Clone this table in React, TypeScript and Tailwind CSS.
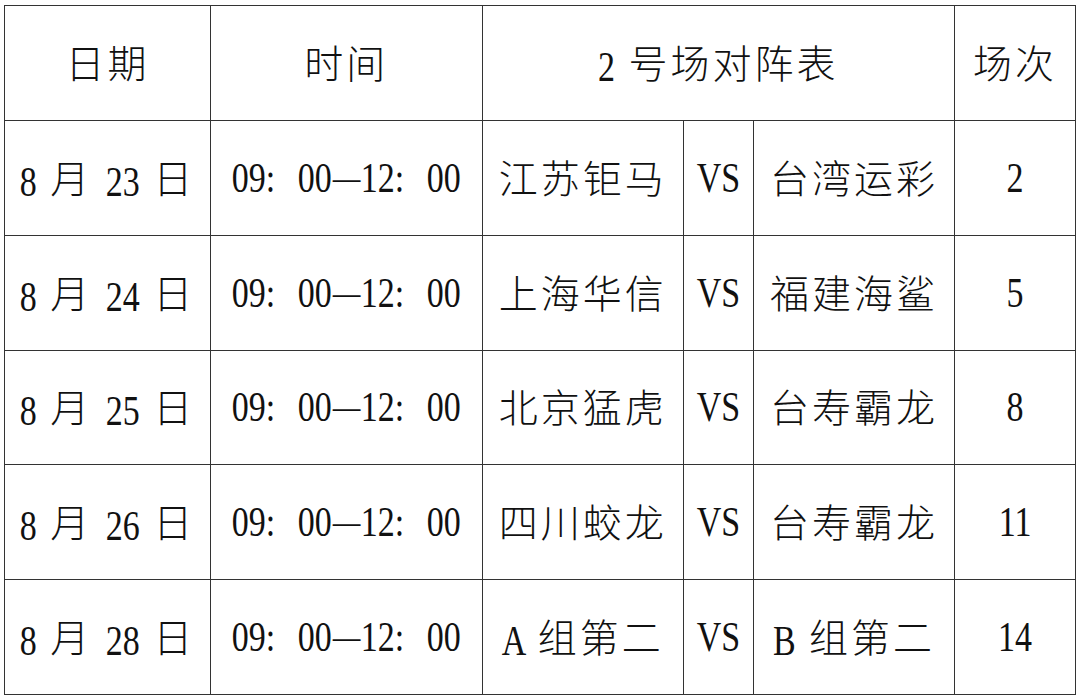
import React from 'react';

interface Match {
    date: string;
    time: string;
    home: string;
    away: string;
    round: string;
}

const matches: Match[] = [
    { date: '8 月 23 日', time: '09: 00–12: 00', home: '江苏钜马', away: '台湾运彩', round: '2' },
    { date: '8 月 24 日', time: '09: 00–12: 00', home: '上海华信', away: '福建海鲨', round: '5' },
    { date: '8 月 25 日', time: '09: 00–12: 00', home: '北京猛虎', away: '台寿霸龙', round: '8' },
    { date: '8 月 26 日', time: '09: 00–12: 00', home: '四川蛟龙', away: '台寿霸龙', round: '11' },
    { date: '8 月 28 日', time: '09: 00–12: 00', home: 'A 组第二', away: 'B 组第二', round: '14' },
];

const SPLIT = /([\u4e00-\u9fff]+|–)/;
const IS_CJK = /[\u4e00-\u9fff]/;

// Latin runs are drawn taller than normal, as in the source document
function Txt({ s, wide }: { s: string; wide?: boolean }) {
    const parts = s.split(SPLIT).filter(Boolean);
    return (
        <span className={`whitespace-nowrap text-[#111] ${wide ? '[word-spacing:14px]' : '[word-spacing:5px]'}`}>
            {parts.map((p, i) => {
                if (IS_CJK.test(p)) {
                    return (
                        <span key={i} className="font-['Noto_Sans_CJK_SC',sans-serif] font-light text-[39px] tracking-[3px] leading-none">
                            {p}
                        </span>
                    );
                }
                if (p === '–') {
                    return (
                        <span key={i} className="inline-block mx-[6px] scale-x-[1.6] font-['Liberation_Serif',serif] text-[34px] leading-none">
                            {p}
                        </span>
                    );
                }
                return (
                    <span key={i} className="inline-block scale-y-[1.27] font-['Liberation_Serif',serif] text-[34px] leading-none whitespace-pre">
                        {p}
                    </span>
                );
            })}
        </span>
    );
}

const cell = 'border-[1.5px] border-[#333] text-center align-middle p-0';

export default function App() {
    return (
        <div className="bg-white w-[1080px] h-[695px] pl-[4px] pt-[5px] overflow-hidden">
            <table className="border-collapse table-fixed w-[1071px]">
                <colgroup>
                    <col className="w-[206px]" />
                    <col className="w-[271.5px]" />
                    <col className="w-[201.5px]" />
                    <col className="w-[70px]" />
                    <col className="w-[201px]" />
                    <col className="w-[121px]" />
                </colgroup>
                <thead>
                    <tr className="h-[115px]">
                        <th className={`${cell} font-normal`}><Txt s="日期" /></th>
                        <th className={`${cell} font-normal`}><Txt s="时间" /></th>
                        <th colSpan={3} className={`${cell} font-normal`}><Txt s="2 号场对阵表" /></th>
                        <th className={`${cell} font-normal`}><Txt s="场次" /></th>
                    </tr>
                </thead>
                <tbody>
                    {matches.map(m => (
                        <tr key={m.date} className="h-[114.8px]">
                            <td className={cell}><Txt s={m.date} /></td>
                            <td className={cell}><Txt s={m.time} wide /></td>
                            <td className={cell}><Txt s={m.home} /></td>
                            <td className={cell}><Txt s="VS" /></td>
                            <td className={cell}><Txt s={m.away} /></td>
                            <td className={cell}><Txt s={m.round} /></td>
                        </tr>
                    ))}
                </tbody>
            </table>
        </div>
    );
}
